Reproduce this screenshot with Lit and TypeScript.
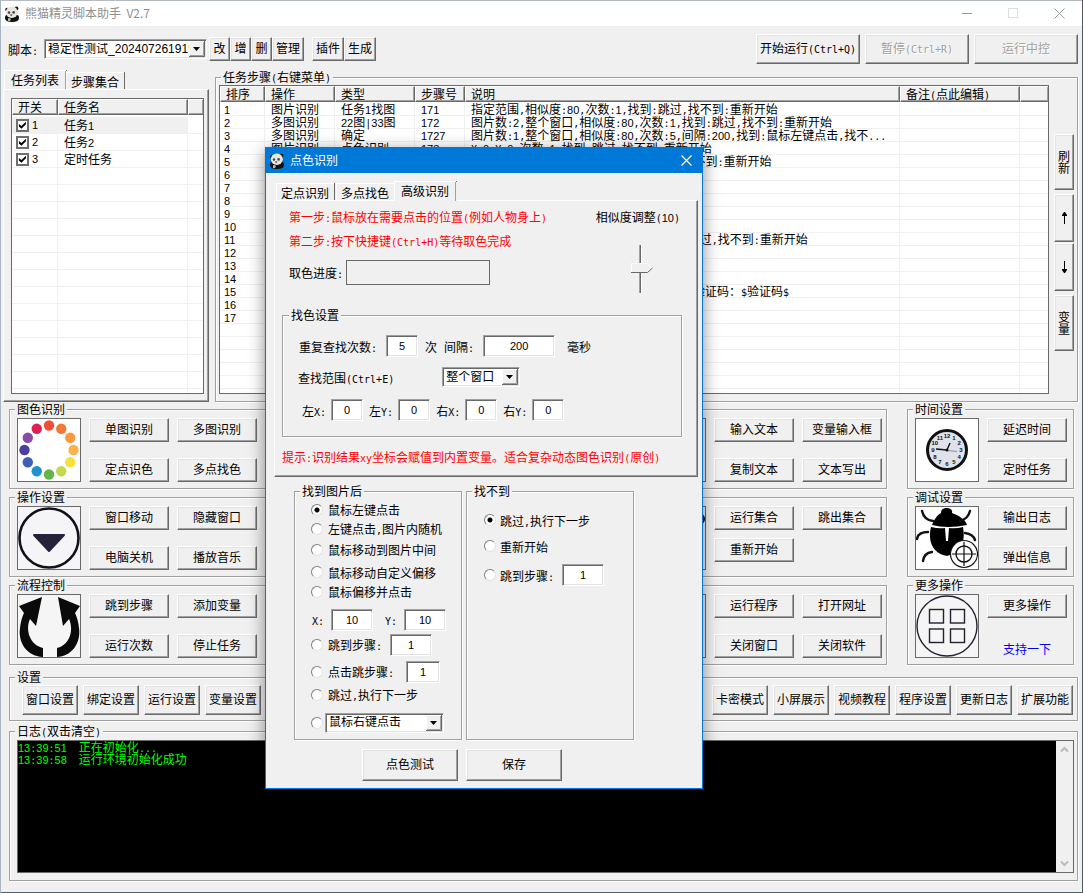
import { LitElement, html, svg, css, nothing } from "lit";
import { customElement, state } from "lit/decorators.js";
import { classMap } from "lit/directives/class-map.js";

/** Sets digits and Latin runs in half-width faces so they sit on the CJK grid. */
const t = (s: string) =>
  s
    .split(/([0-9]+|[\x20-\x2f\x3a-\x7e]+)/)
    .filter((p) => p !== "")
    .map((p) =>
      /^[0-9]+$/.test(p)
        ? html`<span class="dg">${p}</span>`
        : /^[\x20-\x7e]+$/.test(p)
          ? html`<span class="hw">${p}</span>`
          : p
    );

const btn = (label: string, cls = "", disabled = false) =>
  html`<button type="button" class="btn ${cls}" ?disabled=${disabled}>${t(label)}</button>`;

const panda = svg`
  <path d="M3 9Q1 9 1 12Q1 16 8 16Q15 16 15 12Q15 9 13 9Z" fill="#111"/>
  <circle cx="3" cy="3.6" r="1.8" fill="#151515"/><circle cx="12.4" cy="2.6" r="2" fill="#151515"/>
  <ellipse cx="7.8" cy="6.2" rx="6" ry="5.8" fill="#e9e6df"/>
  <ellipse cx="5" cy="6.6" rx="1.2" ry="1.3" fill="#444"/><ellipse cx="9.6" cy="6.4" rx="1.3" ry="1.3" fill="#444"/>
  <ellipse cx="7.2" cy="9" rx="1.1" ry=".7" fill="#333"/>
  <path d="M4 12.5Q5 11.5 7 13L6 15H4Z" fill="#bdb8ac"/>`;

const wheelColors = ["#f04e37", "#f27a36", "#f79a3b", "#f9b24e", "#f5e13d", "#c5d94d", "#63b54a", "#1f93d0", "#3d5fb5", "#4b3f9e", "#8a4aa8", "#df2055"];
const icons: Record<string, unknown> = {
  wheel: svg`<rect width="62" height="62" fill="#fff"/>${wheelColors.map((c, i) => {
    const a = (i * Math.PI) / 6;
    return svg`<circle cx=${31 + 24.5 * Math.sin(a)} cy=${31 - 24.5 * Math.cos(a)} r="5.2" fill=${c}/>`;
  })}`,
  down: svg`<rect width="62" height="62" fill="#f5f5f8"/><circle cx="31" cy="31" r="29.5" fill="none" stroke="#111119" stroke-width="2.6"/>
    <path d="M16 28H46L31 44Z" fill="#25223a" stroke="#25223a" stroke-width="2" stroke-linejoin="round"/>`,
  loop: svg`<rect width="62" height="62" fill="#f5f5f5"/>
    <path d="M1 11L24 2L18 31L12 24C7 35 12 50 25 53V62C8 61 0 47 2 33Q3 24 6 18Z" fill="#0a0a0a"/>
    <path d="M62 11L40 2L45 31L51 24C56 35 52 50 39 53V62C55 61 63 47 61 33Q60 24 57 18Z" fill="#0a0a0a"/>`,
  clock: svg`<rect width="62" height="62" fill="#fff"/><circle cx="31" cy="31" r="19.5" fill="#dfe2ea" stroke="#111" stroke-width="3"/>
    ${Array.from({ length: 12 }, (_, i) => {
      const a = ((i + 1) * Math.PI) / 6;
      return svg`<text x=${31 + 14 * Math.sin(a)} y=${33.2 - 13.8 * Math.cos(a)} font-size="6" font-weight="bold" text-anchor="middle" fill="#111">${i + 1}</text>`;
    })}
    <path d="M31 31L20 30M31 31L34 24" stroke="#111" stroke-width="1.4"/><path d="M27 31L41 32.5" stroke="#666" stroke-width=".7"/><circle cx="31" cy="31" r="1.5" fill="#111"/>`,
  bug: svg`<rect width="62" height="62" fill="#fff"/>
    <path d="M25 6C25 2 28 1 31 1C34 1 37 3 36 6C42 8 50 13 51 18Q31 22 16 18C18 13 21 8 25 6Z" fill="#000"/>
    <path d="M15 20Q23 22 29 21L30 34L32 34L33 21Q40 22 47 20C49 32 48 44 31 49C15 46 12 32 15 20Z" fill="#000"/>
    <g fill="none" stroke="#111" stroke-width="2.4" stroke-linecap="round"><path d="M6 4Q8 13 17 14M54 4Q52 12 44 14M12 25Q2 25 1 32M49 26Q57 27 59 33M16 45Q8 46 7 54"/></g>
    <circle cx="48" cy="47" r="13.5" fill="#fff" stroke="#111" stroke-width="1.2"/><circle cx="48" cy="47" r="8" fill="none" stroke="#111" stroke-width="1.4"/>
    <path d="M36 47H60M48 35V59" stroke="#111" stroke-width="1.2"/>`,
  more: svg`<rect width="62" height="62" fill="#f5f5f5"/><circle cx="31" cy="31" r="30" fill="none" stroke="#222230" stroke-width="1.4"/>
    <g fill="none" stroke="#222230" stroke-width="1.4"><rect x="13.5" y="14.5" width="14" height="13.5"/><rect x="34.5" y="14.5" width="14" height="13.5"/><rect x="13.5" y="34" width="14" height="13.5"/><rect x="34.5" y="34" width="14" height="13.5"/></g>`,
  plain: svg`<rect width="62" height="62" fill="#f0f0f0"/>`,
  knob: svg`<rect width="62" height="62" fill="#f0f0f0"/><circle cx="56" cy="12" r="6" fill="#000"/>`,
};

interface Group {
  title: string;
  icon: string;
  buttons: string[];
  kind: string;
}
const groups: Group[] = [
  { title: "图色识别", icon: "wheel", buttons: ["单图识别", "多图识别", "定点识色", "多点找色"], kind: "" },
  { title: "", icon: "plain", buttons: ["输入文本", "变量输入框", "复制文本", "文本写出"], kind: "" },
  { title: "时间设置", icon: "clock", buttons: ["延迟时间", "定时任务"], kind: "single" },
  { title: "操作设置", icon: "down", buttons: ["窗口移动", "隐藏窗口", "电脑关机", "播放音乐"], kind: "" },
  { title: "", icon: "knob", buttons: ["运行集合", "跳出集合", "重新开始"], kind: "tight" },
  { title: "调试设置", icon: "bug", buttons: ["输出日志", "弹出信息"], kind: "single" },
  { title: "流程控制", icon: "loop", buttons: ["跳到步骤", "添加变量", "运行次数", "停止任务"], kind: "" },
  { title: "", icon: "plain", buttons: ["运行程序", "打开网址", "关闭窗口", "关闭软件"], kind: "" },
  { title: "更多操作", icon: "more", buttons: ["更多操作"], kind: "single" },
];

const steps: string[][] = [
  ["1", "图片识别", "任务1找图", "171", "指定范围,相似度:80,次数:1,找到:跳过,找不到:重新开始"],
  ["2", "多图识别", "22图|33图", "172", "图片数:2,整个窗口,相似度:80,次数:1,找到:跳过,找不到:重新开始"],
  ["3", "多图识别", "确定", "1727", "图片数:1,整个窗口,相似度:80,次数:5,间隔:200,找到:鼠标左键点击,找不..."],
  ["4", "图片识别", "点色识别", "173", "X:0,Y:0,次数:1,找到:跳过,找不到:重新开始"],
  ["5", "", "", "", "指定范围,相似度:8,次数:1,找到:跳过,找不到:重新开始"],
  ["6"], ["7"], ["8"], ["9"], ["10"],
  ["11", "", "", "", "指定范围,相似度:80,次数:1,随机,找到:跳过,找不到:重新开始"],
  ["12"], ["13"], ["14"],
  ["15", "", "", "", "输入文本到当前窗口的指定输入框位置中:验证码：$验证码$"],
  ["16"], ["17"], [], [], [], [], [], [],
];

@customElement("app-root")
export class AppRoot extends LitElement {
  @state() private hit = 0;
  @state() private miss = 0;
  @state() private similarity = 10;

  static styles = css`
    :host { display: block; font: 12px/13px "Noto Sans CJK SC", "Liberation Sans", sans-serif; color: #000; }
    * { box-sizing: border-box; }
    .dg { font-family: "Liberation Sans", Arial, sans-serif; font-size: 11px; line-height: 0; }
    .hw { font-family: "DejaVu Sans Mono", monospace; font-size: 10px; line-height: 0; white-space: pre; }
    .window { position: relative; min-height: 100vh; background: #f0f0f0; display: flex; flex-direction: column; padding: 0 5px 12px 3px; overflow: hidden;
      box-shadow: inset 1px 0 #a9b7c4, inset -1px 0 #4d5863, inset 0 -1px #4c6068; }
    button, input, select { font: inherit; color: inherit; margin: 0; border-radius: 0; }
    .title { display: flex; align-items: center; height: 26px; margin: 0 -4px 0 -2px; padding-left: 3px; background: #fff; color: #8f8f8f; border-top: 1px solid #b4bcc2; }
    .title h1 { flex: 1; margin: 0 0 0 5px; padding-bottom: 2px; font: 12px/16px "Noto Sans CJK SC", sans-serif; white-space: pre; }
    .title svg { flex: none; }
    .caption { border: 0; background: none; padding: 0; width: 46px; height: 24px; display: grid; place-items: center; }
    .btn { padding: 0 0 2px; background: #f0f0f0; border: 1px solid; border-color: #fff #696969 #696969 #fff; box-shadow: inset -1px -1px #a0a0a0, inset 1px 1px #e3e3e3; white-space: nowrap; line-height: 14px; text-align: center; }
    .btn:disabled { color: #a0a0a0; text-shadow: 1px 1px #fff; }
    .sq { width: 21px; height: 24px; }
    .two { width: 32px; height: 24px; }
    .run { width: 104px; height: 30px; }
    .act { width: 80px; height: 24px; }
    .set { width: 56px; height: 30px; }
    .big { width: 96px; height: 32px; }
    .toolbar { display: flex; align-items: center; padding: 8px 0 7px 5px; }
    .toolbar .script { display: flex; align-items: center; gap: 6px; margin-right: 2px; }
    .toolbar .edit { display: flex; margin-right: 8px; }
    .toolbar .right { display: flex; gap: 5px; margin-left: auto; }
    .drop { display: inline-grid; align-items: center; }
    .drop select, .drop svg { grid-area: 1 / 1; }
    .drop svg { justify-self: end; margin-right: 2px; pointer-events: none; }
    .drop select { appearance: none; width: 100%; height: 20px; padding: 0 16px 0 3px; background: #fff; font-family: "Liberation Sans", "Noto Sans CJK SC", sans-serif; }
    .drop select, .box { border: 1px solid; border-color: #a0a0a0 #fff #fff #a0a0a0; box-shadow: inset 1px 1px #696969, inset -1px -1px #e3e3e3; outline: none; }
    .box { height: 22px; padding: 0; background: #fff; text-align: center; font-family: "Liberation Sans", Arial, sans-serif; font-size: 11px; }
    .w32 { width: 32px; } .w34 { width: 34px; } .w42 { width: 42px; } .w72 { width: 72px; }
    .w78 { width: 78px; } .w119 { width: 119px; } .w163 { width: 163px; }

    fieldset { margin: 0; min-width: 0; padding: 0 7px; border: 1px solid #a0a0a0; box-shadow: 1px 1px #fff, inset 1px 1px #fff; }
    legend { margin-left: -2px; padding: 0 2px; height: 13px; line-height: 11px; background: #f0f0f0; white-space: nowrap; }
    legend.none { visibility: hidden; width: 0; padding: 0; margin: 0; }

    .main { display: flex; gap: 6px; }
    .left { width: 206px; flex: none; display: flex; flex-direction: column; }
    .tabs { display: flex; align-items: flex-end; height: 18px; padding-left: 1px; }
    .tab { height: 17px; border: solid; border-width: 1px 0 0 1px; border-color: #fff; background: #f0f0f0; padding: 0 5px 0 4px; line-height: 15px; box-shadow: 1px 0 #696969; white-space: nowrap; margin-right: 2px; }
    .tab.on { height: 20px; margin: 0 0 -1px; padding: 0 7px 2px 6px; box-shadow: 1px 1px #f0f0f0, 1px 0 #696969, inset -1px 0 #a0a0a0; }
    .tab.flat { box-shadow: none; margin-right: 0; }
    .panel { border: 1px solid; border-color: #fff #696969 #696969 #fff; box-shadow: inset -1px -1px #a0a0a0; }
    .left .panel { flex: 1; padding: 8px 4px 7px 7px; }
    .list { background: #fff; border: 1px solid #696969; overflow: hidden; }
    .list.tasks { height: 296px; }
    .list.steps { height: 309px; flex: 1; min-width: 0; }
    table { border-collapse: separate; border-spacing: 0; table-layout: fixed; width: 100%; }
    th { height: 16px; padding: 0 0 1px 5px; background: #f0f0f0; text-align: left; font-weight: normal; line-height: 13px; border: 1px solid; border-color: #fff #696969 #696969 #fff; box-shadow: inset -1px -1px #a0a0a0; white-space: nowrap; }
    th:last-child { border-right: 0; }
    tbody::before { content: ""; display: table-row; height: 1px; }
    td { padding: 0 0 0 6px; white-space: nowrap; border: solid #f0f0f0; border-width: 0 1px 1px 0; }
    td:last-child { border-right: 0; }
    td:first-child { padding-left: 4px; }
    .steps td { height: 13px; line-height: 12px; }
    .tasks td { height: 17px; line-height: 16px; }
    .tasks tbody::before { height: 2px; }
    .tasks tr.sel td:not(:last-child) { background: #f0f0f0; }
    .tasks label { display: flex; align-items: center; gap: 3px; }
    .c44 { width: 45px; } .c46 { width: 46px; } .c130 { width: 130px; } .c70 { width: 70px; } .c80 { width: 80px; } .c50 { width: 50px; } .c120 { width: 120px; } .c29 { width: 28px; }
    .tick { appearance: none; width: 13px; height: 13px; background: #fff; border: 2px solid #6f6f6f; display: grid; place-items: center; }
    .tick:checked::before { content: ""; width: 9px; height: 8px; background: #000; clip-path: polygon(10% 38%, 38% 62%, 88% 8%, 88% 42%, 38% 96%, 10% 70%); }
    .stepbox { flex: 1; padding: 0 3px 7px; }
    .stepbox legend { margin-left: 2px; }
    .steprow { display: flex; gap: 5px; padding-top: 1px; }
    .side { display: flex; flex-direction: column; width: 20px; padding-top: 49px; }
    .side .btn { width: 20px; height: 48px; white-space: normal; line-height: 12px; padding: 0 3px; margin-bottom: 1px; }
    .side .tall { height: 56px; margin-bottom: 4px; }
    .side .low { margin-top: 3px; }

    .groups { display: grid; grid-template-columns: minmax(0, 1fr) 253px 167px; gap: 2px 20px; padding: 1px 4px 0 6px; }
    .group { height: 86px; }
    .group:nth-child(3n + 1) { margin-right: -13px; }
    .cells { display: flex; gap: 8px; padding-top: 2px; }
    .pic { width: 64px; height: 64px; border: 1px solid #696969; flex: none; display: block; font-family: "Liberation Sans", sans-serif; }
    .acts { display: grid; grid-template-columns: 80px 80px; gap: 16px 8px; align-content: start; }
    .single .acts { grid-template-columns: 80px; }
    .tight .acts { row-gap: 8px; }
    .acts a { color: #00f; text-decoration: none; justify-self: center; padding-top: 8px; }
    .settings { margin: 6px 0 0 6px; height: 50px; padding: 0 4px 0 12px; }
    .settings legend { margin-left: -7px; }
    .bar { display: flex; justify-content: space-between; padding-top: 1px; }
    .bar > div { display: flex; gap: 5px; }
    .logbox { margin: 4px 0 0 6px; padding: 0 3px 7px 7px; }
    .log { display: flex; height: 133px; margin-top: 2px; border: 1px solid #696969; background: #000; color: #0f0; }
    .lines { flex: 1; line-height: 12px; white-space: pre; }
    .scroll { width: 17px; background: #f0f0f0; display: flex; flex-direction: column; justify-content: space-between; padding: 5px 4px; }

    .dialog { position: absolute; left: 265px; top: 147px; width: 438px; background: #f0f0f0; border: 1px solid #0078d7; padding-bottom: 7px; box-shadow: 0 4px 16px rgba(0, 0, 0, 0.45); }
    .dtitle { display: flex; align-items: center; height: 25px; background: #0078d7; color: #fff; padding-left: 3px; }
    .dtitle h2 { flex: 1; margin: 0 0 0 5px; padding-bottom: 2px; font: 12px/16px "Noto Sans CJK SC", sans-serif; }
    .dtitle .caption { width: 31px; }
    .dtabs { margin: 9px 0 0 9px; }
    .dialog .panel { margin: 0 4px 0 8px; padding: 4px 15px 7px 7px; }
    .red { color: #f00; line-height: 24px; white-space: nowrap; }
    .top { display: flex; justify-content: space-between; padding-left: 7px; }
    .top .sim { display: flex; flex-direction: column; align-items: center; margin-right: 2px; line-height: 24px; }
    .vslider { display: grid; width: 24px; height: 50px; margin: 15px 0 0 8px; }
    .vslider svg, .vslider input { grid-area: 1 / 1; }
    .vslider input { writing-mode: vertical-lr; width: 24px; height: 50px; opacity: 0; }
    .progress { display: flex; align-items: center; gap: 3px; margin-top: 7px; }
    progress { appearance: none; width: 144px; height: 25px; border: 1px solid #696969; background: #f0f0f0; }
    progress::-webkit-progress-bar { background: #f0f0f0; }
    .find { margin-top: 15px; padding-bottom: 15px; }
    .find legend { margin-left: -1px; }
    .row { display: flex; align-items: center; white-space: nowrap; }
    .row label { display: flex; align-items: center; }
    .r1 { padding: 13px 0 0 9px; gap: 7px; } .r1 label { gap: 9px; } .r1 .unit { margin-left: 5px; }
    .r2 { padding: 10px 0 0 8px; } .r2 label { gap: 48px; }
    .r3 { padding: 12px 0 0 12px; gap: 6px; } .r3 label { gap: 5px; }
    .hint { margin-top: 8px; }
    .results { display: flex; gap: 4px; padding: 8px 0 0 28px; }
    .results fieldset { width: 168px; height: 255px; }
    .results .inner { padding: 2px 0 0 9px; }
    .pick { display: flex; align-items: center; gap: 5px; white-space: nowrap; }
    .radio { appearance: none; width: 12px; height: 12px; border-radius: 50%; border: 1px solid; border-color: #808080 #e3e3e3 #e3e3e3 #808080; background: #fff; flex: none; }
    .radio:checked { background: radial-gradient(circle, #000 0 2px, #fff 3px); }
    .h19 { height: 19px; } .h21 { height: 22px; } .h23 { height: 23px; } .h18 { height: 17px; } .h31 { height: 31px; } .h15 { height: 15px; }
    .gap8 { gap: 8px; } .gap12 { gap: 12px; } .gap2 { gap: 2px; }
    .xy { height: 27px; margin-top: 6px; padding-left: 1px; gap: 12px; } .xy label { gap: 7px; }
    .last { height: 23px; margin-top: 9px; }
    .miss .inner { padding: 9px 0 0 10px; } .miss .pick { gap: 4px; }
    .h26 { height: 26px; } .h32 { height: 32px; }
    .foot { display: flex; gap: 8px; padding: 9px 0 0 96px; }
  `;

  private drop(value: string, width: string, label: string) {
    return html`<span class="drop ${width}">
      <select aria-label=${label}><option>${value}</option></select>
      <svg width="16" height="16" viewBox="0 0 16 16"><rect width="16" height="16" fill="#f0f0f0"/><path d="M.5 15.5V.5H15.5" fill="none" stroke="#fff"/><path d="M0 15.5H15.5V0" fill="none" stroke="#696969"/><path d="M1 14.5H14.5V1" fill="none" stroke="#a0a0a0"/><path d="M4 6H11L7.5 10Z"/></svg>
    </span>`;
  }

  private radio(group: "hit" | "miss", index: number, text: string) {
    return html`<label class="pick"><input class="radio" type="radio" name=${group} aria-label=${text || "鼠标右键点击"}
      .checked=${this[group] === index} @change=${() => (this[group] = index)}>${text ? html`<span>${t(text)}</span>` : nothing}</label>`;
  }

  private box(value: string, width: string, label: string) {
    return html`<input class="box ${width}" type="text" .value=${value} aria-label=${label}>`;
  }

  private tasks() {
    const rows = [["1", "任务1"], ["2", "任务2"], ["3", "定时任务"], ...Array.from({ length: 14 }, () => [] as string[])];
    return html`<div class="left">
      <div class="tabs" role="tablist">
        <button type="button" class="tab on" role="tab">任务列表</button>
        <button type="button" class="tab" role="tab">步骤集合</button>
      </div>
      <div class="panel"><div class="list tasks"><table>
        <thead><tr><th class="c46">开关</th><th class="c130">任务名</th><th></th></tr></thead>
        <tbody>${rows.map((r, i) => html`<tr class=${classMap({ sel: i === 0 })}>
          <td>${r[0] ? html`<label><input class="tick" type="checkbox" checked>${t(r[0])}</label>` : nothing}</td>
          <td>${t(r[1] ?? "")}</td><td></td></tr>`)}</tbody>
      </table></div></div>
    </div>`;
  }

  private stepList() {
    return html`<fieldset class="stepbox"><legend>${t("任务步骤(右键菜单)")}</legend>
      <div class="steprow">
        <div class="list steps"><table>
          <thead><tr><th class="c44">排序</th><th class="c70">操作</th><th class="c80">类型</th><th class="c50">步骤号</th><th>说明</th><th class="c120">${t("备注(点此编辑)")}</th><th class="c29"></th></tr></thead>
          <tbody>${steps.map((r) => html`<tr>${[0, 1, 2, 3, 4, 5, 6].map((c) => html`<td>${t(r[c] ?? "")}</td>`)}</tr>`)}</tbody>
        </table></div>
        <div class="side">
          ${btn("刷新", "tall")}
          <button type="button" class="btn" aria-label="上移"><svg width="7" height="12" viewBox="0 0 7 12"><path d="M3 0H4L6 3V4H4V12H3V4H1V3Z"/></svg></button>
          <button type="button" class="btn" aria-label="下移"><svg width="7" height="12" viewBox="0 0 7 12"><path d="M3 12H4L6 9V8H4V0H3V8H1V9Z"/></svg></button>
          ${btn("变量", "tall low")}
        </div>
      </div>
    </fieldset>`;
  }

  private dialog() {
    return html`<section class="dialog" role="dialog" aria-label="点色识别">
      <div class="dtitle">
        <svg width="16" height="16" viewBox="0 0 16 16">${panda}</svg><h2>点色识别</h2>
        <button type="button" class="caption" aria-label="关闭"><svg width="11" height="11" viewBox="0 0 11 11"><path d="M.5 .5L10.5 10.5M10.5 .5L.5 10.5" stroke="#fff" stroke-width="1.2"/></svg></button>
      </div>
      <div class="tabs dtabs" role="tablist">
        <button type="button" class="tab" role="tab">定点识别</button>
        <button type="button" class="tab flat" role="tab">多点找色</button>
        <button type="button" class="tab on" role="tab">高级识别</button>
      </div>
      <div class="panel">
        <div class="top">
          <div>
            <div class="red">${t("第一步:鼠标放在需要点击的位置(例如人物身上)")}</div>
            <div class="red">${t("第二步:按下快捷键(Ctrl+H)等待取色完成")}</div>
            <div class="progress"><label for="pick-progress">${t("取色进度:")}</label><progress id="pick-progress" max="100" value="0"></progress></div>
          </div>
          <div class="sim">
            <label for="similarity">${t(`相似度调整(${this.similarity})`)}</label>
            <div class="vslider">
              <svg width="24" height="50" viewBox="0 0 24 50"><path d="M9.5 1V49" stroke="#a0a0a0"/><path d="M10.5 1V49" stroke="#696969"/><path d="M11.5 1V50H9" fill="none" stroke="#fff"/><path d="M1 19H17L22 24L17 28H1Z" fill="#f0f0f0"/><path d="M1.5 28V19.5H17L22 24" fill="none" stroke="#fff"/><path d="M1 28.5H17.5L22.5 24" fill="none" stroke="#696969"/></svg>
              <input id="similarity" type="range" min="0" max="20" .value=${String(this.similarity)} @input=${(e: Event) => (this.similarity = Number((e.target as HTMLInputElement).value))}>
            </div>
          </div>
        </div>
        <fieldset class="find"><legend>找色设置</legend>
          <div class="row r1"><label><span>${t("重复查找次数:")}</span>${this.box("5", "w32", "重复查找次数")}</label><span>次</span><label><span>${t("间隔:")}</span>${this.box("200", "w72", "间隔")}</label><span class="unit">毫秒</span></div>
          <div class="row r2"><label><span>${t("查找范围(Ctrl+E)")}</span>${this.drop("整个窗口", "w78", "查找范围")}</label></div>
          <div class="row r3">${["左X:", "左Y:", "右X:", "右Y:"].map((l) => html`<label><span>${t(l)}</span>${this.box("0", "w32", l)}</label>`)}</div>
        </fieldset>
        <div class="red hint">${t("提示:识别结果xy坐标会赋值到内置变量。适合复杂动态图色识别(原创)")}</div>
      </div>
      <div class="results">
        <fieldset><legend>找到图片后</legend><div class="inner">
          <div class="row h19">${this.radio("hit", 0, "鼠标左键点击")}</div>
          <div class="row h19">${this.radio("hit", 1, "左键点击,图片内随机")}</div>
          <div class="row h23">${this.radio("hit", 2, "鼠标移动到图片中间")}</div>
          <div class="row h21">${this.radio("hit", 3, "鼠标移动自定义偏移")}</div>
          <div class="row h18">${this.radio("hit", 4, "鼠标偏移并点击")}</div>
          <div class="row xy"><label><span>${t("X:")}</span>${this.box("10", "w42", "X")}</label><label><span>${t("Y:")}</span>${this.box("10", "w42", "Y")}</label></div>
          <div class="row h23 gap8">${this.radio("hit", 5, "跳到步骤:")}${this.box("1", "w42", "跳到步骤")}</div>
          <div class="row h31 gap12">${this.radio("hit", 6, "点击跳步骤:")}${this.box("1", "w34", "点击跳步骤")}</div>
          <div class="row h15">${this.radio("hit", 7, "跳过,执行下一步")}</div>
          <div class="row last gap2">${this.radio("hit", 8, "")}${this.drop("鼠标右键点击", "w119", "点击方式")}</div>
        </div></fieldset>
        <fieldset class="miss"><legend>找不到</legend><div class="inner">
          <div class="row h26">${this.radio("miss", 0, "跳过,执行下一步")}</div>
          <div class="row h26">${this.radio("miss", 1, "重新开始")}</div>
          <div class="row h32 gap8">${this.radio("miss", 2, "跳到步骤:")}${this.box("1", "w42", "找不到时跳到步骤")}</div>
        </div></fieldset>
      </div>
      <div class="foot">${btn("点色测试", "big")}${btn("保存", "big")}</div>
    </section>`;
  }

  render() {
    return html`<div class="window">
      <header class="title">
        <svg width="16" height="16" viewBox="0 0 16 16">${panda}</svg>
        <h1>熊猫精灵脚本助手  V2.7</h1>
        <button type="button" class="caption" aria-label="最小化"><svg width="11" height="11"><path d="M0 5.5H10" stroke="#999"/></svg></button>
        <button type="button" class="caption" aria-label="最大化"><svg width="11" height="11"><rect x=".5" y=".5" width="9" height="9" fill="none" stroke="#ddd"/></svg></button>
        <button type="button" class="caption" aria-label="关闭"><svg width="11" height="11"><path d="M.5 .5L10.5 10.5M10.5 .5L.5 10.5" stroke="#999"/></svg></button>
      </header>
      <div class="toolbar">
        <div class="script"><span>${t("脚本:")}</span>${this.drop("稳定性测试_2024072619191", "w163", "脚本")}</div>
        <div class="edit">${["改", "增", "删"].map((l) => btn(l, "sq"))}${btn("管理", "two")}</div>
        ${btn("插件", "two")}${btn("生成", "two")}
        <div class="right">${btn("开始运行(Ctrl+Q)", "run")}${btn("暂停(Ctrl+R)", "run", true)}${btn("运行中控", "run", true)}</div>
      </div>
      <div class="main">${this.tasks()}${this.stepList()}</div>
      <div class="groups">${groups.map((g) => html`<fieldset class="group ${g.kind}">
        <legend class=${g.title ? "" : "none"}>${g.title}</legend>
        <div class="cells">
          <svg class="pic" viewBox="0 0 62 62">${icons[g.icon]}</svg>
          <div class="acts">${g.buttons.map((b) => btn(b, "act"))}${g.icon === "more" ? html`<a href="#support">支持一下</a>` : nothing}</div>
        </div></fieldset>`)}</div>
      <fieldset class="settings"><legend>设置</legend><div class="bar">
        <div>${["窗口设置", "绑定设置", "运行设置", "变量设置"].map((l) => btn(l, "set"))}</div>
        <div>${["卡密模式", "小屏展示", "视频教程", "程序设置", "更新日志", "扩展功能"].map((l) => btn(l, "set"))}</div>
      </div></fieldset>
      <fieldset class="logbox"><legend>${t("日志(双击清空)")}</legend>
        <div class="log" role="log"><div class="lines"><div>${t("13:39:51  正在初始化...")}</div><div>${t("13:39:58  运行环境初始化成功")}</div></div>
          <div class="scroll"><svg width="9" height="7"><path d="M1 5.5L4.5 2L8 5.5" fill="none" stroke="#bbb" stroke-width="2"/></svg><svg width="9" height="7"><path d="M1 1.5L4.5 5L8 1.5" fill="none" stroke="#bbb" stroke-width="2"/></svg></div>
        </div>
      </fieldset>
      ${this.dialog()}
    </div>`;
  }
}
